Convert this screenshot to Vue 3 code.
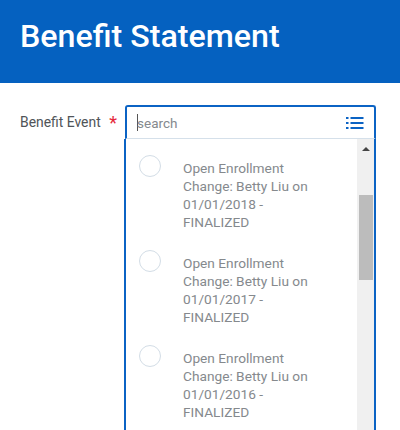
<script setup>
const events = [
  { id: 1, date: '01/01/2018' },
  { id: 2, date: '01/01/2017' },
  { id: 3, date: '01/01/2016' },
]
</script>

<template>
  <div class="page">
    <header class="page-header">
      <h1>Benefit Statement</h1>
    </header>

    <div class="form-row">
      <label class="field-label">Benefit Event <span class="required">*</span></label>

      <div class="field">
        <div class="search-box">
          <span class="caret"></span>
          <span class="placeholder">search</span>
          <svg class="list-icon" width="18" height="14" viewBox="0 0 18 14">
            <rect x="0" y="1" width="2.5" height="2" fill="#0b63c4" />
            <rect x="0" y="6" width="2.5" height="2" fill="#0b63c4" />
            <rect x="0" y="11" width="2.5" height="2" fill="#0b63c4" />
            <rect x="4.5" y="1" width="13" height="2" fill="#0b63c4" />
            <rect x="4.5" y="6" width="13" height="2" fill="#0b63c4" />
            <rect x="4.5" y="11" width="13" height="2" fill="#0b63c4" />
          </svg>
        </div>

        <div class="dropdown">
          <ul class="options">
            <li v-for="event in events" :key="event.id" class="option">
              <span class="radio"></span>
              <span class="option-text">Open Enrollment Change: Betty Liu on {{ event.date }} - FINALIZED</span>
            </li>
          </ul>
          <div class="scrollbar">
            <span class="arrow"></span>
            <span class="thumb"></span>
          </div>
        </div>
      </div>
    </div>
  </div>
</template>

<style>
html,
body {
  margin: 0;
  background: #fff;
}
</style>

<style scoped>
.page {
  height: 430px;
  overflow: hidden;
  font-family: Roboto, "Liberation Sans", sans-serif;
}

.page-header {
  height: 83px;
  box-sizing: border-box;
  padding: 16px 20px 0;
  background: #0561c0;
}

.page-header h1 {
  margin: 0;
  color: #fff;
  font-size: 32.2px;
  line-height: 41px;
  font-weight: 500;
}

.form-row {
  display: flex;
  padding: 22px 0 0 20px;
}

.field-label {
  width: 105px;
  flex: none;
  margin-top: 8px;
  color: #505458;
  font-size: 13.9px;
  line-height: 18px;
  font-weight: 400;
}

.required {
  margin-left: 5px;
  color: #e5283a;
  font-size: 18px;
  line-height: 14px;
  vertical-align: -2px;
}

.field {
  width: 251px;
  flex: none;
}

.search-box {
  height: 34px;
  box-sizing: border-box;
  display: flex;
  align-items: center;
  padding: 0 10px 0 10px;
  border: 2px solid #0b63c4;
  border-bottom: 1px solid #d5e0ea;
  border-radius: 3px 3px 0 0;
}

.caret {
  width: 1px;
  height: 17px;
  background: #555;
}

.placeholder {
  flex: 1;
  margin-left: -1px;
  color: #85898e;
  font-size: 13.5px;
}

.dropdown {
  display: flex;
  height: 300px;
  margin-left: -1px;
  box-sizing: border-box;
  border: 2px solid #0b63c4;
  border-top: none;
}

.options {
  flex: 1;
  margin: 0;
  padding: 16px 0 0;
  list-style: none;
}

.option {
  display: flex;
  height: 95px;
}

.radio {
  flex: none;
  width: 22px;
  height: 22px;
  box-sizing: border-box;
  margin-left: 13px;
  border: 1.5px solid #d3dde6;
  border-radius: 50%;
}

.option-text {
  width: 134px;
  margin: 4px 0 0 22px;
  color: #85898d;
  font-size: 13.7px;
  line-height: 18px;
}

.scrollbar {
  position: relative;
  flex: none;
  width: 17px;
  margin-left: -1px;
  background: #f0f0f0;
}

.arrow {
  position: absolute;
  top: 8px;
  left: 5px;
  border-left: 4px solid transparent;
  border-right: 4px solid transparent;
  border-bottom: 4px solid #444;
}

.thumb {
  position: absolute;
  top: 56px;
  left: 2px;
  width: 14px;
  height: 85px;
  background: #bcbcbc;
}
</style>
